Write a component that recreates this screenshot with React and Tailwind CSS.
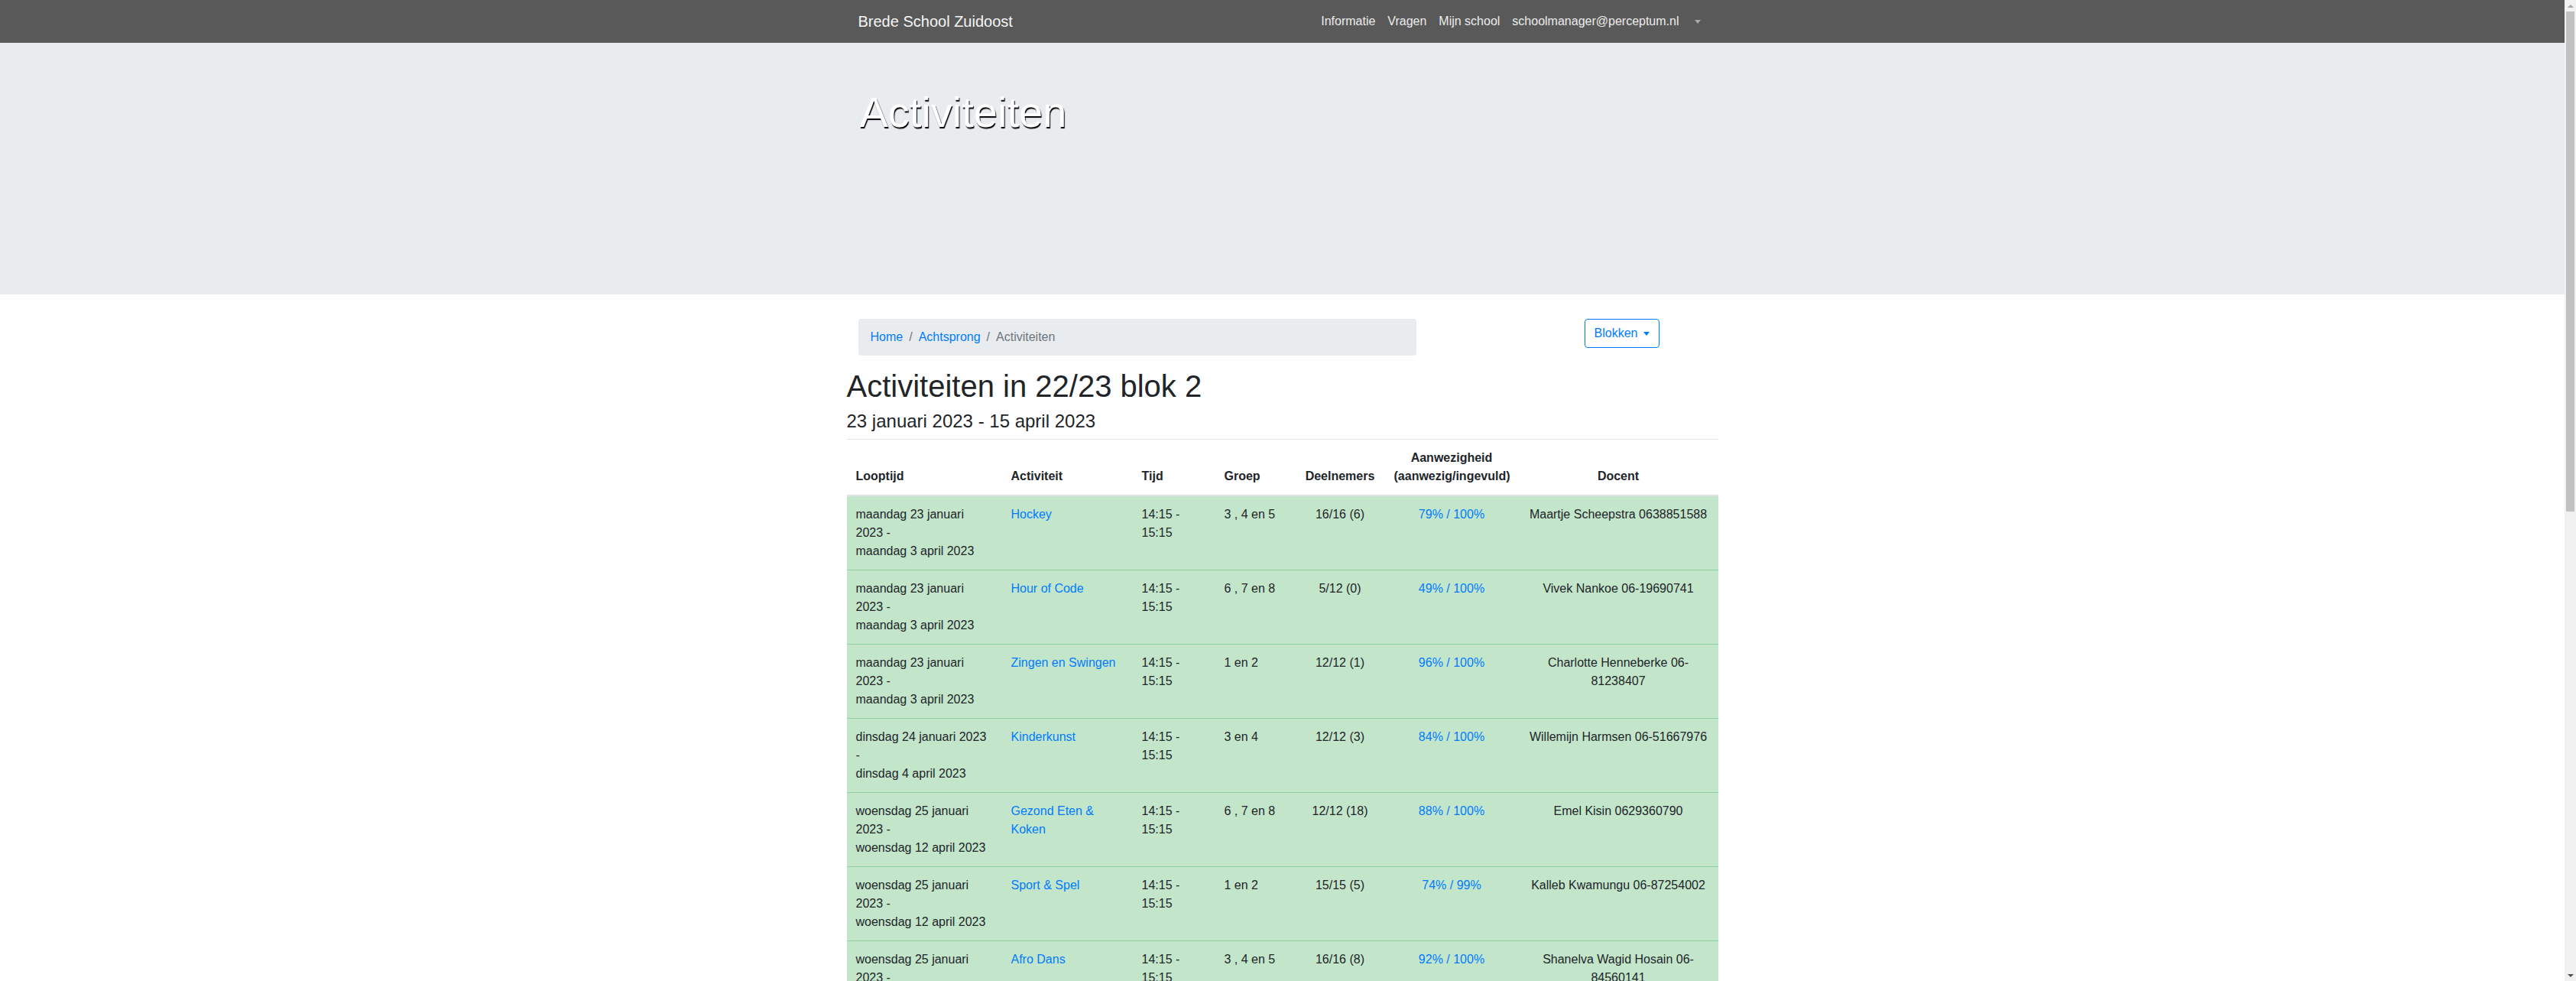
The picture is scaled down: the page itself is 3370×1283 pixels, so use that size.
import React from 'react'

const rows = [
  { start: 'maandag 23 januari 2023', end: 'maandag 3 april 2023', name: 'Hockey', groep: '3 , 4 en 5', deel: '16/16 (6)', aanw: '79% / 100%', docent: 'Maartje Scheepstra 0638851588' },
  { start: 'maandag 23 januari 2023', end: 'maandag 3 april 2023', name: 'Hour of Code', groep: '6 , 7 en 8', deel: '5/12 (0)', aanw: '49% / 100%', docent: 'Vivek Nankoe 06-19690741' },
  { start: 'maandag 23 januari 2023', end: 'maandag 3 april 2023', name: 'Zingen en Swingen', groep: '1 en 2', deel: '12/12 (1)', aanw: '96% / 100%', docent: 'Charlotte Henneberke 06-81238407' },
  { start: 'dinsdag 24 januari 2023', end: 'dinsdag 4 april 2023', name: 'Kinderkunst', groep: '3 en 4', deel: '12/12 (3)', aanw: '84% / 100%', docent: 'Willemijn Harmsen 06-51667976' },
  { start: 'woensdag 25 januari 2023', end: 'woensdag 12 april 2023', name: 'Gezond Eten & Koken', groep: '6 , 7 en 8', deel: '12/12 (18)', aanw: '88% / 100%', docent: 'Emel Kisin 0629360790' },
  { start: 'woensdag 25 januari 2023', end: 'woensdag 12 april 2023', name: 'Sport & Spel', groep: '1 en 2', deel: '15/15 (5)', aanw: '74% / 99%', docent: 'Kalleb Kwamungu 06-87254002' },
  { start: 'woensdag 25 januari 2023', end: 'woensdag 12 april 2023', name: 'Afro Dans', groep: '3 , 4 en 5', deel: '16/16 (8)', aanw: '92% / 100%', docent: 'Shanelva Wagid Hosain 06-84560141' },
  { start: 'donderdag 26 januari 2023', end: 'donderdag 13 april 2023', name: 'Schaken', groep: '5 en 6', deel: '10/12 (2)', aanw: '81% / 100%', docent: 'Ruben de Vries 06-23456789' },
  { start: 'donderdag 26 januari 2023', end: 'donderdag 13 april 2023', name: 'Toneel', groep: '3 , 4 en 5', deel: '14/16 (4)', aanw: '86% / 100%', docent: 'Sanne Bakker 06-34567890' },
  { start: 'donderdag 26 januari 2023', end: 'donderdag 13 april 2023', name: 'Voetbal', groep: '6 , 7 en 8', deel: '16/16 (9)', aanw: '90% / 100%', docent: 'Mohamed El Amrani 06-45678901' },
  { start: 'vrijdag 27 januari 2023', end: 'vrijdag 14 april 2023', name: 'Knutselen', groep: '1 en 2', deel: '12/12 (2)', aanw: '93% / 100%', docent: 'Lisa Jansen 06-56789012' },
  { start: 'vrijdag 27 januari 2023', end: 'vrijdag 14 april 2023', name: 'Muziek', groep: '3 en 4', deel: '11/12 (1)', aanw: '78% / 100%', docent: 'Jeroen Smit 06-67890123' },
  { start: 'vrijdag 27 januari 2023', end: 'vrijdag 14 april 2023', name: 'Dans', groep: '5 en 6', deel: '15/16 (6)', aanw: '87% / 100%', docent: 'Naomi Pinas 06-78901234' },
  { start: 'maandag 23 januari 2023', end: 'maandag 3 april 2023', name: 'Judo', groep: '3 , 4 en 5', deel: '12/12 (5)', aanw: '89% / 100%', docent: 'Kevin Mol 06-89012345' },
  { start: 'dinsdag 24 januari 2023', end: 'dinsdag 4 april 2023', name: 'Programmeren', groep: '6 , 7 en 8', deel: '9/12 (0)', aanw: '72% / 100%', docent: 'Ayse Demir 06-90123456' },
  { start: 'dinsdag 24 januari 2023', end: 'dinsdag 4 april 2023', name: 'Fotografie', groep: '6 , 7 en 8', deel: '10/12 (3)', aanw: '83% / 100%', docent: 'Tom Visser 06-11223344' },
  { start: 'woensdag 25 januari 2023', end: 'woensdag 12 april 2023', name: 'Tekenen', groep: '3 en 4', deel: '12/12 (4)', aanw: '91% / 100%', docent: 'Eva Mulder 06-22334455' },
  { start: 'donderdag 26 januari 2023', end: 'donderdag 13 april 2023', name: 'Basketbal', groep: '5 en 6', deel: '14/16 (7)', aanw: '85% / 100%', docent: 'Daan Bos 06-33445566' },
]

const Caret = ({ className }) => (
  <span className={`inline-block w-0 h-0 border-t-[5px] border-x-[4px] border-x-transparent ${className}`} />
)

const thCls = 'p-3 align-bottom border-t border-b-2 border-[#dee2e6]'
const tdCls = 'p-3 align-top border-t border-[#8fd19e]'

export default function App() {
  return (
    <div className="flex h-screen overflow-hidden bg-white font-['Liberation_Sans',Arial,sans-serif] text-[16px] leading-[1.5] text-[#212529]">
      <div className="flex-1 min-w-0 overflow-y-auto [scrollbar-width:none]">
        {/* Navbar */}
        <nav className="bg-[#595959] h-[56px]">
          <div className="w-[1140px] mx-auto px-[15px] h-full flex items-center">
            <span className="text-[20px] leading-[30px] text-[#f5f5f5] mr-4">Brede School Zuidoost</span>
            <div className="ml-auto flex items-center text-[#ececec]">
              <span className="px-2 py-2">Informatie</span>
              <span className="px-2 py-2">Vragen</span>
              <span className="px-2 py-2">Mijn school</span>
              <span className="px-2 py-2">schoolmanager@perceptum.nl</span>
              <span className="px-2 py-2 flex items-center">
                <Caret className="ml-1 border-t-[#a8a8a8]" />
              </span>
            </div>
          </div>
        </nav>

        {/* Jumbotron */}
        <div className="bg-[#e9ecef] h-[329px] mb-8">
          <div className="w-[1140px] mx-auto px-[15px] pt-[57px]">
            <h1 className="ml-[2px] text-[56px] leading-[1.2] font-light text-white [text-shadow:1px_2px_1px_#000]">Activiteiten</h1>
          </div>
        </div>

        <div className="w-[1140px] mx-auto">
          {/* Breadcrumb + Blokken */}
          <div className="flex mb-4">
            <div className="w-[760px] px-[15px]">
              <ol className="flex bg-[#e9ecef] rounded px-4 py-3">
                <li className="text-[#007bff]">Home</li>
                <li className="px-2 text-[#6c757d]">/</li>
                <li className="text-[#007bff]">Achtsprong</li>
                <li className="px-2 text-[#6c757d]">/</li>
                <li className="text-[#6c757d]">Activiteiten</li>
              </ol>
            </div>
            <div className="w-[190px]" />
            <div className="w-[190px] px-[15px]">
              <button className="border border-[#007bff] text-[#007bff] rounded px-3 py-[6px] leading-[1.5] flex items-center">
                Blokken
                <Caret className="ml-2 border-t-[#007bff]" />
              </button>
            </div>
          </div>

          <h1 className="text-[40px] leading-[1.2] font-medium mb-2">Activiteiten in 22/23 blok 2</h1>
          <h4 className="text-[24px] leading-[1.2] font-medium mb-2">23 januari 2023 - 15 april 2023</h4>

          <table className="w-full table-fixed border-collapse mb-4">
            <thead>
              <tr>
                <th className={`w-[203px] text-left ${thCls}`}>Looptijd</th>
                <th className={`w-[171px] text-left ${thCls}`}>Activiteit</th>
                <th className={`w-[108px] text-left ${thCls}`}>Tijd</th>
                <th className={`w-[105px] text-left ${thCls}`}>Groep</th>
                <th className={`w-[117px] text-center ${thCls}`}>Deelnemers</th>
                <th className={`w-[175px] text-center ${thCls}`}>
                  Aanwezigheid<br />(aanwezig/ingevuld)
                </th>
                <th className={`w-[261px] text-center ${thCls}`}>Docent</th>
              </tr>
            </thead>
            <tbody>
              {rows.map((r, i) => (
                <tr key={i} className="bg-[#c3e6cb]">
                  <td className={tdCls}>
                    {r.start} -<br />{r.end}
                  </td>
                  <td className={`${tdCls} text-[#007bff]`}>{r.name}</td>
                  <td className={tdCls}>14:15 - 15:15</td>
                  <td className={tdCls}>{r.groep}</td>
                  <td className={`${tdCls} text-center`}>{r.deel}</td>
                  <td className={`${tdCls} text-center text-[#007bff]`}>{r.aanw}</td>
                  <td className={`${tdCls} text-center`}>{r.docent}</td>
                </tr>
              ))}
            </tbody>
          </table>
        </div>
      </div>

      {/* Browser scrollbar */}
      <div className="w-[15px] shrink-0 bg-[#f1f1f1] flex flex-col items-center">
        <div className="h-[15px] flex items-center justify-center">
          <span className="w-0 h-0 border-b-[4px] border-x-[4px] border-x-transparent border-b-[#a3a3a3]" />
        </div>
        <div className="w-[11px] h-[654px] bg-[#c1c1c1]" />
        <div className="flex-1" />
        <div className="h-[15px] flex items-center justify-center">
          <span className="w-0 h-0 border-t-[4px] border-x-[4px] border-x-transparent border-t-[#505050]" />
        </div>
      </div>
    </div>
  )
}
